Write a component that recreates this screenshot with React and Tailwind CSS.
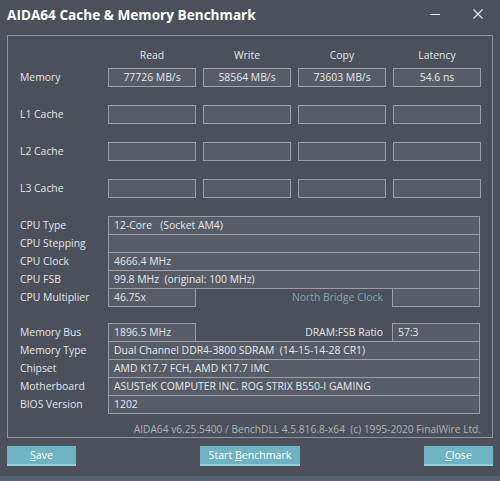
import React from 'react';

const font = { fontFamily: '"Open Sans", "Noto Sans", sans-serif' };

const boxBase = 'h-[19px] border border-[#9a9ea6] bg-[#575c66] text-[10.4px] leading-[17px] text-[#e6e8ec] px-[5px] whitespace-nowrap overflow-hidden';

function Label({ children }) {
  return <div className="w-[88px] shrink-0 text-[10.4px] leading-[19px] text-[#e2e5ea]">{children}</div>;
}

function BenchRow({ label, values, className = '' }) {
  return (
    <div className={`flex items-center ${className}`}>
      <Label>{label}</Label>
      <div className="grid grid-cols-[88px_88px_88px_88px] gap-x-[7px]">
        {values.map((v, i) => (
          <div key={i} className={`${boxBase} text-center`}>{v}</div>
        ))}
      </div>
    </div>
  );
}

function InfoRow({ label, value, short, right, rightLabel, first }) {
  return (
    <div className={`flex items-center ${first ? '' : '-mt-px'}`}>
      <Label>{label}</Label>
      {short ? (
        <div className="flex w-[372px] items-center">
          <div className={`${boxBase} w-[88px]`}>{value}</div>
          <div className={`flex-1 pr-[9px] text-right text-[10.4px] ${rightLabel === 'North Bridge Clock' ? 'text-[#7fa8ad]' : 'text-[#e2e5ea]'}`}>
            {rightLabel}
          </div>
          <div className={`${boxBase} w-[88px]`}>{right}</div>
        </div>
      ) : (
        <div className={`${boxBase} w-[372px]`}>{value}</div>
      )}
    </div>
  );
}

function Btn({ children, className = '' }) {
  return (
    <button className={`flex h-[20px] flex-col bg-[#6fb2c1] text-[10.6px] text-white ${className}`}>
      <span className="flex flex-1 items-center justify-center leading-none">{children}</span>
      <span className="h-[2px] w-full bg-[#8fcfd6]" />
    </button>
  );
}

export default function App() {
  const empty = ['', '', '', ''];
  return (
    <div className="relative h-[481px] w-[500px] overflow-hidden bg-[#4b505a]" style={font}>
      <div className="flex h-[35px] items-start justify-between pl-[7px] pr-[17px] pt-[5px]">
        <div className="text-[13.6px] font-bold text-white">AIDA64 Cache &amp; Memory Benchmark</div>
        <div className="mt-[4px] flex items-center gap-[33px]">
          <svg width="10" height="10" viewBox="0 0 10 10"><path d="M0 5.5H10" stroke="#e8eaee" strokeWidth="1" /></svg>
          <svg width="10" height="10" viewBox="0 0 10 10"><path d="M0.5 0.5L9.5 9.5M9.5 0.5L0.5 9.5" stroke="#e8eaee" strokeWidth="1.1" /></svg>
        </div>
      </div>

      <div className="mx-[7px] h-[403px] border border-[#8f949b] pl-[12px]">
        <div className="mt-[11px] flex">
          <div className="w-[88px] shrink-0" />
          <div className="grid grid-cols-[88px_88px_88px_88px] gap-x-[7px] text-center text-[10.4px] leading-[16px] text-[#e2e5ea]">
            <div>Read</div>
            <div>Write</div>
            <div>Copy</div>
            <div>Latency</div>
          </div>
        </div>
        <BenchRow label="Memory" values={['77726 MB/s', '58564 MB/s', '73603 MB/s', '54.6 ns']} className="mt-[5px]" />
        <BenchRow label="L1 Cache" values={empty} className="mt-[18px]" />
        <BenchRow label="L2 Cache" values={empty} className="mt-[18px]" />
        <BenchRow label="L3 Cache" values={empty} className="mt-[18px]" />

        <div className="mt-[18px]">
          <InfoRow first label="CPU Type" value={<span>12-Core&nbsp;&nbsp;&nbsp;(Socket AM4)</span>} />
          <InfoRow label="CPU Stepping" value="" />
          <InfoRow label="CPU Clock" value="4666.4 MHz" />
          <InfoRow label="CPU FSB" value={<span>99.8 MHz&nbsp;&nbsp;(original: 100 MHz)</span>} />
          <InfoRow label="CPU Multiplier" value="46.75x" short rightLabel="North Bridge Clock" right="" />
        </div>

        <div className="mt-[16px]">
          <InfoRow first label="Memory Bus" value="1896.5 MHz" short rightLabel="DRAM:FSB Ratio" right="57:3" />
          <InfoRow label="Memory Type" value={<span>Dual Channel DDR4-3800 SDRAM&nbsp;&nbsp;(14-15-14-28 CR1)</span>} />
          <InfoRow label="Chipset" value="AMD K17.7 FCH, AMD K17.7 IMC" />
          <InfoRow label="Motherboard" value="ASUSTeK COMPUTER INC. ROG STRIX B550-I GAMING" />
          <InfoRow label="BIOS Version" value="1202" />
        </div>

        <div className="mt-[8px] pr-[11px] text-right text-[10.2px] text-[#aeb2b9]">
          AIDA64 v6.25.5400 / BenchDLL 4.5.816.8-x64&nbsp;&nbsp;(c) 1995-2020 FinalWire Ltd.
        </div>
      </div>

      <div className="mt-[8px] flex items-center justify-between px-[7px]">
        <Btn className="w-[69px]"><span><span className="underline">S</span>ave</span></Btn>
        <Btn className="w-[100px]"><span>Start <span className="underline">B</span>enchmark</span></Btn>
        <Btn className="w-[69px]"><span><span className="underline">C</span>lose</span></Btn>
      </div>

      <div className="absolute bottom-0 left-0 h-[5px] w-full bg-[#586172]" />
    </div>
  );
}
